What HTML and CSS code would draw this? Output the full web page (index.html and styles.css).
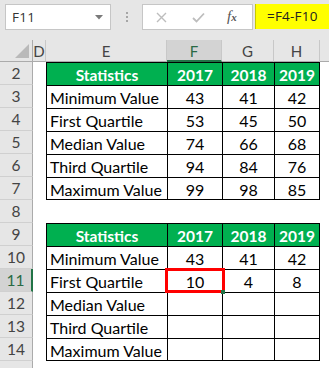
FILE: index.html
```html
<!DOCTYPE html>
<html>
<head>
<meta charset="utf-8">
<link rel="stylesheet" href="styles.css">
</head>
<body>
<div class="app">
  <div class="toolbar">
    <div class="namebox">
      <span class="nb-text">F11</span>
      <svg class="nb-arrow" width="8" height="5" viewBox="0 0 8 5"><path d="M0 0 H8 L4 4.5 Z" fill="#7a7a7a"/></svg>
    </div>
    <div class="grip"><i></i><i></i><i></i></div>
    <div class="fbtns">
      <svg class="ico-x" width="11" height="11" viewBox="0 0 11 11"><path d="M1 1 L10 10 M10 1 L1 10" stroke="#bdbdbd" stroke-width="1.4" fill="none"/></svg>
      <svg class="ico-ok" width="13" height="11" viewBox="0 0 13 11"><path d="M1 6 L4.5 9.5 L12 1.5" stroke="#bdbdbd" stroke-width="1.8" fill="none"/></svg>
      <span class="fx">f<span class="fx-x">x</span></span>
    </div>
    <div class="formula">=F4-F10</div>
  </div>

  <div class="sheet">
    <!-- column headers -->
    <div class="corner"><span class="tri"></span></div>
    <div class="ch">D</div>
    <div class="ch">E</div>
    <div class="ch ch-sel">F</div>
    <div class="ch">G</div>
    <div class="ch">H</div>
    <div class="ch ch-last"></div>

    <!-- row 2 -->
    <div class="rh">2</div><div class="c"></div>
    <div class="t tl tg">Statistics</div><div class="t tg">2017</div><div class="t tg">2018</div><div class="t tg tr">2019</div><div class="c"></div>
    <!-- row 3 -->
    <div class="rh">3</div><div class="c"></div>
    <div class="t tl lab">Minimum Value</div><div class="t">43</div><div class="t">41</div><div class="t tr">42</div><div class="c"></div>
    <!-- row 4 -->
    <div class="rh">4</div><div class="c"></div>
    <div class="t tl lab">First Quartile</div><div class="t">53</div><div class="t">45</div><div class="t tr">50</div><div class="c"></div>
    <!-- row 5 -->
    <div class="rh">5</div><div class="c"></div>
    <div class="t tl lab">Median Value</div><div class="t">74</div><div class="t">66</div><div class="t tr">68</div><div class="c"></div>
    <!-- row 6 -->
    <div class="rh">6</div><div class="c"></div>
    <div class="t tl lab">Third Quartile</div><div class="t">94</div><div class="t">84</div><div class="t tr">76</div><div class="c"></div>
    <!-- row 7 -->
    <div class="rh">7</div><div class="c"></div>
    <div class="t tl tb lab">Maximum Value</div><div class="t tb">99</div><div class="t tb">98</div><div class="t tr tb">85</div><div class="c"></div>
    <!-- row 8 -->
    <div class="rh">8</div><div class="c"></div>
    <div class="c"></div><div class="c"></div><div class="c"></div><div class="c"></div><div class="c"></div>
    <!-- row 9 -->
    <div class="rh">9</div><div class="c"></div>
    <div class="t tl tg">Statistics</div><div class="t tg">2017</div><div class="t tg">2018</div><div class="t tg tr">2019</div><div class="c"></div>
    <!-- row 10 -->
    <div class="rh">10</div><div class="c"></div>
    <div class="t tl lab">Minimum Value</div><div class="t">43</div><div class="t">41</div><div class="t tr">42</div><div class="c"></div>
    <!-- row 11 -->
    <div class="rh rh-sel">11</div><div class="c"></div>
    <div class="t tl lab">First Quartile</div><div class="t active">10<span class="selbox"></span><span class="handle"></span></div><div class="t">4</div><div class="t tr">8</div><div class="c"></div>
    <!-- row 12 -->
    <div class="rh">12</div><div class="c"></div>
    <div class="t tl lab">Median Value</div><div class="t"></div><div class="t"></div><div class="t tr"></div><div class="c"></div>
    <!-- row 13 -->
    <div class="rh">13</div><div class="c"></div>
    <div class="t tl lab">Third Quartile</div><div class="t"></div><div class="t"></div><div class="t tr"></div><div class="c"></div>
    <!-- row 14 -->
    <div class="rh">14</div><div class="c"></div>
    <div class="t tl tb lab">Maximum Value</div><div class="t tb"></div><div class="t tb"></div><div class="t tr tb"></div><div class="c"></div>
    <!-- row 15 (partly visible) -->
    <div class="rh"></div><div class="c"></div>
    <div class="c"></div><div class="c"></div><div class="c"></div><div class="c"></div><div class="c"></div>
  </div>
</div>
</body>
</html>
```

FILE: styles.css
```css
* { box-sizing: border-box; }
html, body {
  margin: 0;
  padding: 0;
  background: #e6e6e6;
  overflow: hidden;
}
.app {
  width: 329px;
  height: 368px;
  overflow: hidden;
}

/* ---------- toolbar ---------- */
.toolbar {
  height: 40px;
  display: flex;
  align-items: flex-start;
  padding-top: 4px;
  font-family: "Open Sans", "Liberation Sans", sans-serif;
}
.namebox {
  margin-left: 5px;
  width: 106px;
  height: 26px;
  background: #fff;
  border: 1px solid #c6c6c6;
  display: flex;
  align-items: center;
  padding-left: 6px;
  padding-right: 7px;
  justify-content: space-between;
}
.nb-text {
  font-size: 13.5px;
  color: #333;
  letter-spacing: 0.3px;
}
.nb-arrow { display: block; }
.grip {
  width: 31px;
  height: 26px;
  display: flex;
  flex-direction: column;
  align-items: center;
  justify-content: center;
  gap: 2px;
}
.grip i {
  display: block;
  width: 2px;
  height: 2px;
  background: #a6a6a6;
}
.fbtns {
  width: 111px;
  height: 26px;
  background: #fff;
  border: 1px solid #c6c6c6;
  display: flex;
  align-items: center;
  padding-left: 13px;
}
.ico-x { margin-right: 25px; }
.ico-ok { margin-right: 22px; }
.fx {
  font-family: "Liberation Serif", serif;
  font-style: italic;
  font-size: 15px;
  color: #555;
  position: relative;
  top: -1px;
}
.fx-x {
  font-size: 11px;
  font-weight: bold;
}
.formula {
  margin-left: 2px;
  flex: 1;
  height: 25px;
  background: #ffff00;
  border-left: 1px solid #c8c800;
  font-size: 13.5px;
  color: #222;
  padding-left: 11px;
  line-height: 24px;
  letter-spacing: 0.2px;
}

/* ---------- sheet ---------- */
.sheet {
  display: grid;
  grid-template-columns: 33px 13px 121px 55px 52px 46px 9px;
  grid-template-rows: 22px repeat(14, 23px);
  font-family: Lato, "Liberation Sans", sans-serif;
  background: #fff;
}
.corner {
  background: #e6e6e6;
  border-right: 1px solid #ababab;
  border-bottom: 1px solid #ababab;
  position: relative;
}
.tri {
  position: absolute;
  right: 3px;
  bottom: 3px;
  width: 0;
  height: 0;
  border-left: 14px solid transparent;
  border-bottom: 14px solid #b9b9b9;
}
.ch {
  background: #e6e6e6;
  border-right: 1px solid #c8c8c8;
  border-bottom: 1px solid #ababab;
  font-size: 15px;
  color: #444;
  display: flex;
  align-items: center;
  justify-content: center;
  padding-top: 1px;
}
.ch-last { border-right: none; }
.ch-sel {
  background: #d3d3d3;
  border-bottom: 2px solid #217346;
  color: #2a6a44;
}
.rh {
  background: #e6e6e6;
  border-right: 1px solid #ababab;
  border-bottom: 1px solid #d0d0d0;
  font-size: 15.5px;
  color: #444;
  display: flex;
  align-items: center;
  justify-content: center;
}
.rh-sel {
  background: #d3d3d3;
  border-right: 2px solid #217346;
  color: #2a6a44;
}
.c { background: #fff; }
.t {
  background: #fff;
  border-top: 1px solid #000;
  border-left: 1px solid #000;
  font-size: 16px;
  color: #000;
  display: flex;
  align-items: center;
  justify-content: center;
  padding-top: 1px;
}
.tr { border-right: 1px solid #000; }
.tb { border-bottom: 1px solid #000; }
.lab {
  justify-content: flex-start;
  padding-left: 3px;
}
.tg {
  background: #00b050;
  color: #fff;
  font-weight: bold;
  font-size: 15.5px;
}
.active { position: relative; }
.selbox {
  position: absolute;
  left: -3px;
  top: -2px;
  width: 60px;
  height: 25px;
  border: 3px solid #ff0000;
}
.handle {
  position: absolute;
  right: -3px;
  bottom: -2px;
  width: 4px;
  height: 4px;
  background: #217346;
}
```
